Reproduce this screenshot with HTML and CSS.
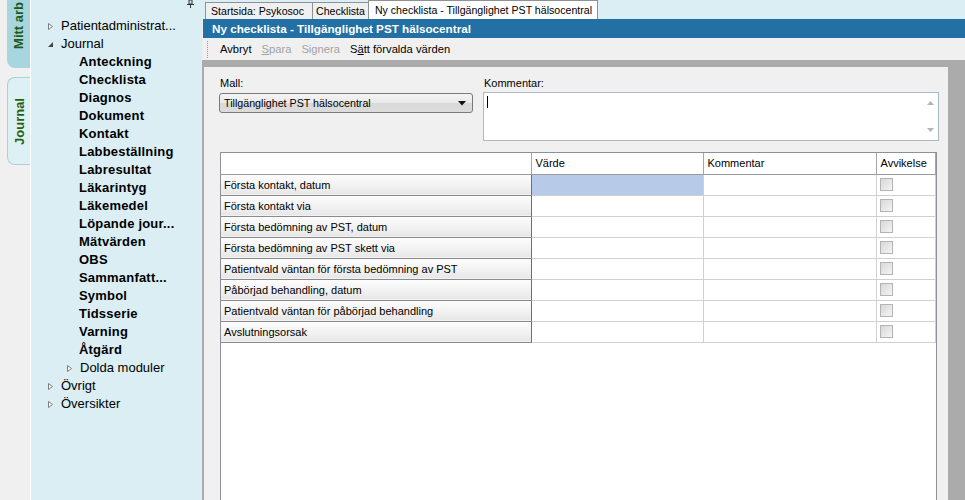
FILE: index.html
```html
<!DOCTYPE html>
<html lang="sv">
<head>
    <meta charset="UTF-8">
    <title>Ny checklista - Tillgänglighet PST hälsocentral</title>
    <link rel="stylesheet" href="styles.css">
</head>
<body>
    <div class="app">
        <!-- vertical side tabs -->
        <div class="side-tabs">
            <div class="side-tab work-tab"><span>Mitt arb</span></div>
            <div class="side-tab journal-tab"><span>Journal</span></div>
        </div>

        <nav class="tree">
            <div class="tree-head">
                <svg class="pin" width="7" height="8" viewBox="0 0 7 8">
                    <rect x="2" y="0" width="3" height="4" fill="none" stroke="#333" stroke-width="1"/>
                    <line x1="0" y1="4.5" x2="7" y2="4.5" stroke="#333"/>
                    <line x1="3.5" y1="5" x2="3.5" y2="8" stroke="#333"/>
                </svg>
            </div>
            <div class="node lvl0"><svg class="twisty" width="14" height="18" viewBox="0 0 14 18"><polygon points="1.5,6.5 5.5,9.5 1.5,12.5" fill="#fff" stroke="#7d7d7d"/></svg>Patientadministrat...</div>
            <div class="node lvl0"><svg class="twisty" width="14" height="18" viewBox="0 0 14 18"><polygon points="6,7 6,12 1,12" fill="#444"/></svg>Journal</div>
            <div class="node leaf">Anteckning</div>
            <div class="node leaf">Checklista</div>
            <div class="node leaf">Diagnos</div>
            <div class="node leaf">Dokument</div>
            <div class="node leaf">Kontakt</div>
            <div class="node leaf">Labbeställning</div>
            <div class="node leaf">Labresultat</div>
            <div class="node leaf">Läkarintyg</div>
            <div class="node leaf">Läkemedel</div>
            <div class="node leaf">Löpande jour...</div>
            <div class="node leaf">Mätvärden</div>
            <div class="node leaf">OBS</div>
            <div class="node leaf">Sammanfatt...</div>
            <div class="node leaf">Symbol</div>
            <div class="node leaf">Tidsserie</div>
            <div class="node leaf">Varning</div>
            <div class="node leaf">Åtgärd</div>
            <div class="node lvl1"><svg class="twisty" width="14" height="18" viewBox="0 0 14 18"><polygon points="1.5,6.5 5.5,9.5 1.5,12.5" fill="#fff" stroke="#7d7d7d"/></svg>Dolda moduler</div>
            <div class="node lvl0"><svg class="twisty" width="14" height="18" viewBox="0 0 14 18"><polygon points="1.5,6.5 5.5,9.5 1.5,12.5" fill="#fff" stroke="#7d7d7d"/></svg>Övrigt</div>
            <div class="node lvl0"><svg class="twisty" width="14" height="18" viewBox="0 0 14 18"><polygon points="1.5,6.5 5.5,9.5 1.5,12.5" fill="#fff" stroke="#7d7d7d"/></svg>Översikter</div>
        </nav>

        <main class="workspace">
            <div class="doc-tabs">
                <div class="doc-tab start">Startsida: Psykosoc</div>
                <div class="doc-tab">Checklista</div>
                <div class="doc-tab active">Ny checklista - Tillgänglighet PST hälsocentral</div>
            </div>
            <div class="title-bar">Ny checklista - Tillgänglighet PST hälsocentral</div>
            <div class="toolbar">
                <span class="grip"></span>
                <span class="tool">Avbryt</span>
                <span class="tool disabled"><u>S</u>para</span>
                <span class="tool disabled">Signera</span>
                <span class="tool">S<u>ä</u>tt förvalda värden</span>
            </div>

            <div class="canvas">
                <div class="panel">
                    <div class="fields">
                        <div class="field mall">
                            <label>Mall:</label>
                            <div class="combo">
                                <span>Tillgänglighet PST hälsocentral</span>
                                <svg width="8" height="5" viewBox="0 0 8 5"><polygon points="0,0 8,0 4,4.5" fill="#111"/></svg>
                            </div>
                        </div>
                        <div class="field comment">
                            <label>Kommentar:</label>
                            <div class="memo">
                                <div class="memo-text"><span class="caret"></span></div>
                                <div class="memo-scroll">
                                    <svg width="7" height="4" viewBox="0 0 7 4"><polygon points="0,4 7,4 3.5,0" fill="#b4b4b4"/></svg>
                                    <svg width="7" height="4" viewBox="0 0 7 4"><polygon points="0,0 7,0 3.5,4" fill="#b4b4b4"/></svg>
                                </div>
                            </div>
                        </div>
                    </div>

                    <div class="grid">
                        <table>
                            <colgroup>
                                <col class="c-name">
                                <col class="c-value">
                                <col class="c-note">
                                <col class="c-flag">
                            </colgroup>
                            <tr class="head">
                                <th></th>
                                <th>Värde</th>
                                <th>Kommentar</th>
                                <th>Avvikelse</th>
                            </tr>
                            <tr><th>Första kontakt, datum</th><td class="selected"></td><td></td><td><span class="check"></span></td></tr>
                            <tr><th>Första kontakt via</th><td></td><td></td><td><span class="check"></span></td></tr>
                            <tr><th>Första bedömning av PST, datum</th><td></td><td></td><td><span class="check"></span></td></tr>
                            <tr><th>Första bedömning av PST skett via</th><td></td><td></td><td><span class="check"></span></td></tr>
                            <tr><th>Patientvald väntan för första bedömning av PST</th><td></td><td></td><td><span class="check"></span></td></tr>
                            <tr><th>Påbörjad behandling, datum</th><td></td><td></td><td><span class="check"></span></td></tr>
                            <tr><th>Patientvald väntan för påbörjad behandling</th><td></td><td></td><td><span class="check"></span></td></tr>
                            <tr><th>Avslutningsorsak</th><td></td><td></td><td><span class="check"></span></td></tr>
                        </table>
                    </div>
                </div>
            </div>
        </main>
    </div>
</body>
</html>
```

FILE: styles.css
```css
/* Base */
body {
    margin: 0;
    font-family: "Liberation Sans", Arial, sans-serif;
    font-size: 11px;
    color: #000;
    background-color: #f0f0f0;
    overflow: hidden;
}

.app {
    display: flex;
    width: 965px;
    height: 500px;
}

/* Side tabs */
.side-tabs {
    width: 30px;
    flex: none;
    box-sizing: border-box;
    padding-left: 7px;
    display: flex;
    flex-direction: column;
    gap: 9px;
    background-color: #f0f0f0;
}

.side-tab {
    display: flex;
    flex-direction: column;
    align-items: center;
    overflow: hidden;
    font-size: 13px;
    font-weight: bold;
}

.side-tab span {
    writing-mode: vertical-rl;
    transform: rotate(180deg);
    white-space: nowrap;
}

.work-tab {
    height: 68px;
    justify-content: flex-end;
    padding-bottom: 19px;
    box-sizing: border-box;
    background-color: #a7d6de;
    border-bottom-left-radius: 8px;
    color: #1c5a1c;
}

.journal-tab {
    height: 88px;
    justify-content: center;
    box-sizing: border-box;
    background-color: #ddf0f4;
    border: 1px solid #a9d2d9;
    border-right: none;
    border-radius: 8px 0 0 8px;
    color: #24600f;
}

/* Tree */
.tree {
    width: 172px;
    flex: none;
    box-sizing: border-box;
    background-color: #daeef3;
    border-left: 1px solid #ffffff;
    font-size: 13px;
}

.tree-head {
    height: 17px;
    display: flex;
    justify-content: flex-end;
    padding-right: 8px;
}

.node {
    height: 18px;
    line-height: 18px;
    white-space: nowrap;
    display: flex;
    align-items: center;
}

.twisty {
    flex: none;
}

.lvl0 {
    padding-left: 16px;
}

.lvl1 {
    padding-left: 35px;
}

.leaf {
    padding-left: 48px;
    font-weight: bold;
    letter-spacing: 0.2px;
}

/* Workspace */
.workspace {
    flex: 1;
    display: flex;
    flex-direction: column;
    min-width: 0;
}

.doc-tabs {
    height: 19px;
    flex: none;
    display: flex;
    align-items: flex-end;
    padding-left: 3px;
    background-color: #daeef3;
    font-size: 10.6px;
}

.doc-tab {
    height: 17px;
    line-height: 16px;
    box-sizing: border-box;
    padding: 0 3px;
    border: 1px solid #8e9298;
    border-bottom: none;
    margin-right: -1px;
    background-color: #f0f0f0;
    white-space: nowrap;
}

.doc-tab.start {
    padding: 0 8px 0 5px;
}

.doc-tab.active {
    height: 19px;
    line-height: 18px;
    background-color: #ffffff;
    padding: 0 5px 0 6px;
}

.title-bar {
    height: 19px;
    line-height: 19px;
    flex: none;
    margin-left: 1px;
    padding-left: 9px;
    background-color: #2270a4;
    color: #ffffff;
    font-size: 11.7px;
    font-weight: bold;
}

.toolbar {
    height: 22px;
    flex: none;
    margin-left: 1px;
    display: flex;
    align-items: center;
    gap: 10px;
    padding-left: 4px;
    background-color: #f0f0f0;
    font-size: 11.2px;
}

.grip {
    width: 1px;
    height: 17px;
    border-left: 1px dotted #9a9a9a;
    margin-right: 1px;
}

.tool.disabled {
    color: #a3a3a3;
}

/* Canvas + form */
.canvas {
    flex: 1;
    display: flex;
    padding: 7px 17px 0 2px;
    background-color: #ababab;
    min-height: 0;
}

.panel {
    flex: 1;
    display: flex;
    flex-direction: column;
    padding: 9px 9px 0 15px;
    background-color: #f0f0f0;
}

.fields {
    display: flex;
    gap: 10px;
    flex: none;
}

.field label {
    display: block;
    height: 13px;
    line-height: 13px;
    margin-left: 1px;
    margin-top: 1px;
}

.mall {
    width: 254px;
}

.mall label {
    margin-bottom: 3px;
}

.combo {
    height: 20px;
    box-sizing: border-box;
    display: flex;
    align-items: center;
    justify-content: space-between;
    padding: 0 6px 0 4px;
    border: 1px solid #7a7a7a;
    border-radius: 3px;
    background: linear-gradient(#f4f4f4, #e9e9e9 50%, #d9d9d9 51%, #dcdcdc);
    font-size: 10.7px;
}

.comment {
    flex: 1;
}

.comment label {
    margin-bottom: 2px;
}

.memo {
    height: 49px;
    box-sizing: border-box;
    display: flex;
    border: 1px solid #abb8c6;
    background-color: #ffffff;
}

.memo-text {
    flex: 1;
    padding: 3px 0 0 3px;
}

.caret {
    display: block;
    width: 1px;
    height: 12px;
    background-color: #000;
}

.memo-scroll {
    width: 16px;
    display: flex;
    flex-direction: column;
    justify-content: space-between;
    align-items: center;
    padding: 8px 0 8px;
}

/* Grid */
.grid {
    flex: 1;
    margin: 11px 2px 0 1px;
    border: 1px solid #8d9197;
    border-bottom: none;
    background-color: #ffffff;
}

table {
    border-collapse: collapse;
    table-layout: fixed;
    width: 714px;
}

.c-name { width: 310px; }
.c-value { width: 172px; }
.c-note { width: 173px; }
.c-flag { width: 59px; }

th, td {
    height: 21px;
    padding: 0 0 0 3px;
    box-sizing: border-box;
    text-align: left;
    font-weight: normal;
    white-space: nowrap;
    border-right: 1px solid #d0d0d0;
    border-bottom: 1px solid #d0d0d0;
}

tr th {
    background: linear-gradient(#fdfdfd, #f1f1f1 60%, #e6e6e6);
    border-right: 1px solid #6f6f6f;
    border-bottom: 1px solid #8a8a8a;
}

.head th {
    background: #ffffff;
    padding-left: 4px;
    border-right: 1px solid #a6a6a6;
    border-bottom: 1px solid #9a9a9a;
}

td.selected {
    background-color: #b7cbe8;
}

.check {
    display: block;
    width: 13px;
    height: 13px;
    box-sizing: border-box;
    border: 1px solid #b4b4b4;
    background: linear-gradient(135deg, #d8d8d8, #f4f4f4);
}
```
